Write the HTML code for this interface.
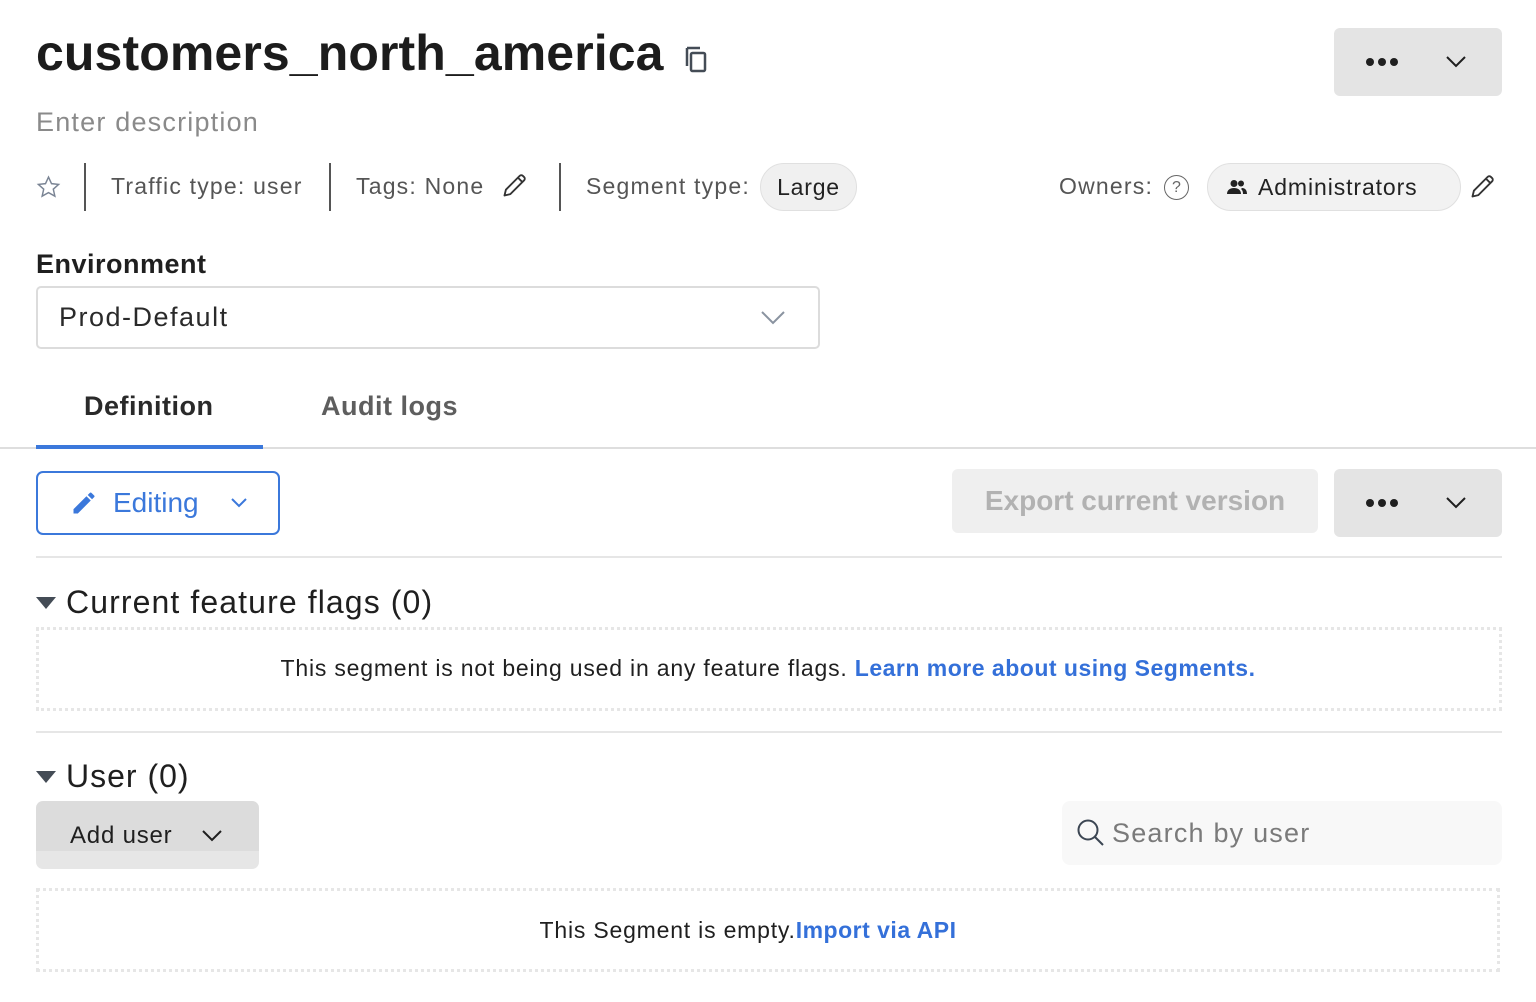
<!DOCTYPE html>
<html><head><meta charset="utf-8"><style>
*{margin:0;padding:0;box-sizing:border-box}
body{width:1536px;height:1002px;background:#fff;font-family:"Liberation Sans",sans-serif;position:relative;overflow:hidden;color:#1f1f1f}
.a{position:absolute;white-space:nowrap}
.vc{display:flex;align-items:center}
.btn{background:#e4e4e4;border-radius:6px}
.dots{display:flex;gap:4px}.dots i{width:8px;height:8px;border-radius:50%;background:#1f1f1f;display:block}
.dotbox{border:3px dotted #e6e6e6}
.m{font-size:23px;color:#555;letter-spacing:1.2px}
</style></head><body>
<div class="a" style="left:36px;top:24px;font-size:50px;font-weight:bold;letter-spacing:0.1px;color:#1c1c1c">customers_north_america</div>
<svg class="a" style="left:683px;top:44px" width="26" height="30" viewBox="0 0 26 30"><path d="M4 4h13" stroke="#444c56" stroke-width="2.5" fill="none"/><path d="M4 4v18" stroke="#444c56" stroke-width="2.5"/><rect x="8" y="9" width="14" height="18" rx="1.5" stroke="#444c56" stroke-width="2.5" fill="none"/></svg>
<div class="a btn vc" style="left:1334px;top:28px;width:168px;height:68px;padding-left:32px"><div class="dots"><i></i><i></i><i></i></div><svg style="margin-left:48px" width="20" height="12" viewBox="0 0 20 12"><path d="M1 1l9 9 9-9" stroke="#1f1f1f" stroke-width="2" fill="none"/></svg></div>
<div class="a" style="left:36px;top:107px;font-size:27px;color:#8a8a8a;letter-spacing:1.2px">Enter description</div>

<svg class="a" style="left:36px;top:175px" width="25" height="25" viewBox="0 0 24 24"><path d="M12 2l2.9 6.3 6.8.7-5.1 4.6 1.5 6.7L12 16.9 5.9 20.3l1.5-6.7L2.3 9l6.8-.7z" stroke="#7a8494" stroke-width="1.4" fill="none"/></svg>
<div class="a" style="left:84px;top:163px;width:2px;height:48px;background:#555"></div>
<div class="a m" style="left:111px;top:173px">Traffic type: user</div>
<div class="a" style="left:329px;top:163px;width:2px;height:48px;background:#555"></div>
<div class="a m" style="left:356px;top:173px">Tags: None</div>
<svg class="a" style="left:501px;top:171px" width="28" height="28" viewBox="0 0 24 24"><path d="M3 21l1.2-5L16 4.2a2 2 0 012.8 0l1 1a2 2 0 010 2.8L8 19.8zM14.5 5.7l3.8 3.8" stroke="#333" stroke-width="1.6" fill="none" stroke-linejoin="round"/></svg>
<div class="a" style="left:559px;top:163px;width:2px;height:48px;background:#555"></div>
<div class="a m" style="left:586px;top:173px">Segment type:</div>
<div class="a vc" style="left:760px;top:163px;width:97px;height:48px;border-radius:24px;background:#f0f0f0;border:1px solid #e0e0e0;justify-content:center;font-size:23px;color:#222;letter-spacing:0.8px">Large</div>

<div class="a m" style="left:1059px;top:173px">Owners:</div>
<div class="a vc" style="left:1164px;top:175px;width:25px;height:25px;border:1.5px solid #666;border-radius:50%;justify-content:center;font-size:16px;color:#666">?</div>
<div class="a vc" style="left:1207px;top:163px;width:254px;height:48px;border-radius:24px;background:#f2f2f2;border:1px solid #e0e0e0;padding-left:18px;font-size:23px;color:#222;letter-spacing:0.9px">
<svg width="22" height="16" viewBox="0 0 22 16" style="margin-right:10px"><circle cx="8" cy="4.5" r="3.5" fill="#222"/><path d="M1 15c0-4 3-6 7-6s7 2 7 6z" fill="#222"/><circle cx="15" cy="4.5" r="3" fill="#222"/><path d="M16 9c3 0 5 2 5 6h-4c0-2-.5-4-2-5z" fill="#222"/></svg>Administrators</div>
<svg class="a" style="left:1469px;top:172px" width="28" height="28" viewBox="0 0 24 24"><path d="M3 21l1.2-5L16 4.2a2 2 0 012.8 0l1 1a2 2 0 010 2.8L8 19.8zM14.5 5.7l3.8 3.8" stroke="#333" stroke-width="1.6" fill="none" stroke-linejoin="round"/></svg>

<div class="a" style="left:36px;top:249px;font-size:27px;font-weight:bold;color:#1f1f1f;letter-spacing:0.5px">Environment</div>
<div class="a vc" style="left:36px;top:286px;width:784px;height:63px;border:2px solid #dcdcdc;border-radius:5px;padding-left:21px;font-size:27px;color:#2a2a2a;letter-spacing:1.5px">Prod-Default
<svg style="position:absolute;right:33px;top:23px" width="24" height="14" viewBox="0 0 24 14"><path d="M1 1l11 11 11-11" stroke="#8a93a0" stroke-width="2" fill="none"/></svg></div>

<div class="a" style="left:84px;top:391px;font-size:27px;font-weight:bold;color:#2a2a2a;letter-spacing:0.5px">Definition</div>
<div class="a" style="left:321px;top:391px;font-size:27px;font-weight:bold;color:#5e5e5e;letter-spacing:0.5px">Audit logs</div>
<div class="a" style="left:0;top:447px;width:1536px;height:2px;background:#dedede"></div>
<div class="a" style="left:36px;top:445px;width:227px;height:4px;background:#3b78db"></div>

<div class="a vc" style="left:36px;top:471px;width:244px;height:64px;border:2px solid #3b78db;border-radius:7px;padding-left:32px;font-size:28px;color:#3b78db">
<svg width="28" height="28" viewBox="0 0 24 24" style="margin-right:15px"><path d="M3 17.3V21h3.7L17.8 9.9l-3.7-3.7zM20.7 7a1 1 0 000-1.4l-2.3-2.3a1 1 0 00-1.4 0l-1.8 1.8 3.7 3.7z" fill="#3b78db"/></svg>Editing
<svg style="margin-left:32px" width="16" height="10" viewBox="0 0 16 10"><path d="M1 1l7 7 7-7" stroke="#3b78db" stroke-width="2" fill="none"/></svg></div>
<div class="a vc" style="left:952px;top:469px;width:366px;height:64px;background:#efefef;border-radius:6px;justify-content:center;font-size:28px;font-weight:bold;color:#b2b2b2">Export current version</div>
<div class="a btn vc" style="left:1334px;top:469px;width:168px;height:68px;padding-left:32px"><div class="dots"><i></i><i></i><i></i></div><svg style="margin-left:48px" width="20" height="12" viewBox="0 0 20 12"><path d="M1 1l9 9 9-9" stroke="#1f1f1f" stroke-width="2" fill="none"/></svg></div>

<div class="a" style="left:36px;top:556px;width:1466px;height:2px;background:#e6e6e6"></div>
<svg class="a" style="left:36px;top:597px" width="20" height="12" viewBox="0 0 20 12"><path d="M0 0h20L10 12z" fill="#444c56"/></svg>
<div class="a" style="left:66px;top:584px;font-size:32px;color:#1f1f1f;letter-spacing:1.1px">Current feature flags (0)</div>
<div class="a dotbox" style="left:36px;top:627px;width:1466px;height:84px"></div>
<div class="a" style="left:0;top:655px;width:1536px;text-align:center;font-size:23px;color:#1f1f1f;letter-spacing:0.8px">This segment is not being used in any feature flags. <span style="color:#3470d9;font-weight:bold;letter-spacing:0.5px">Learn more about using Segments.</span></div>

<div class="a" style="left:36px;top:731px;width:1466px;height:2px;background:#e6e6e6"></div>
<svg class="a" style="left:36px;top:771px" width="20" height="12" viewBox="0 0 20 12"><path d="M0 0h20L10 12z" fill="#444c56"/></svg>
<div class="a" style="left:66px;top:758px;font-size:32px;color:#1f1f1f;letter-spacing:1px">User (0)</div>
<div class="a" style="left:36px;top:801px;width:223px;height:68px;border-radius:7px;background:linear-gradient(#dcdcdc 0,#dcdcdc 50px,#e6e6e6 50px)"></div>
<div class="a vc" style="left:70px;top:822px;font-size:24px;color:#1f1f1f;letter-spacing:0.8px">Add user<svg style="margin-left:30px" width="20" height="12" viewBox="0 0 20 12"><path d="M1 1l9 9 9-9" stroke="#1f1f1f" stroke-width="2" fill="none"/></svg></div>
<div class="a vc" style="left:1062px;top:801px;width:440px;height:64px;background:#f8f8f8;border-radius:8px;padding-left:14px;font-size:27px;color:#7a7a7a;letter-spacing:1.2px">
<svg width="30" height="30" viewBox="0 0 30 30" style="margin-right:6px"><circle cx="12" cy="12" r="9.5" stroke="#3c4653" stroke-width="2" fill="none"/><path d="M19 19l8 8" stroke="#3c4653" stroke-width="2"/></svg>Search by user</div>
<div class="a dotbox" style="left:36px;top:888px;width:1464px;height:84px"></div>
<div class="a" style="left:0;top:917px;width:1496px;text-align:center;font-size:23px;color:#1f1f1f;letter-spacing:0.8px">This Segment is empty.<span style="color:#3470d9;font-weight:bold;letter-spacing:0.5px">Import via API</span></div>
</body></html>
